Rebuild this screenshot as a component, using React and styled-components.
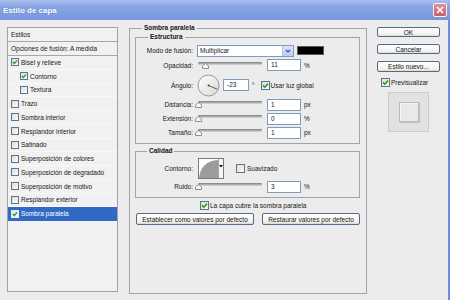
import React from 'react';
import styled, { createGlobalStyle } from 'styled-components';

const GlobalStyle = createGlobalStyle`
  html, body {
    margin: 0;
    padding: 0;
  }
  body {
    width: 450px;
    height: 300px;
    overflow: hidden;
    background: #ececec;
    font-family: "Liberation Sans", Arial, sans-serif;
    font-size: 6.5px;
    color: #161616;
  }
`;

const Window = styled.div`
  width: 450px;
  height: 300px;
  display: flex;
  flex-direction: column;
  background: #ececec;
`;

const TitleBar = styled.div`
  height: 20px;
  flex: none;
  box-sizing: border-box;
  display: flex;
  align-items: center;
  justify-content: space-between;
  padding: 0 3px;
  background: linear-gradient(#a9bfef 0%, #88a4e3 35%, #7896dc 100%);
`;

const Title = styled.span`
  color: #fff;
  font-weight: bold;
  font-size: 8px;
  text-shadow: 0 0 1px rgba(40, 60, 140, 0.5);
`;

const CloseButton = styled.div`
  width: 14px;
  height: 14px;
  box-sizing: border-box;
  border: 1px solid #f2f2f2;
  border-radius: 2px;
  background: linear-gradient(#e2919a, #cb5e6c);
  display: flex;
  align-items: center;
  justify-content: center;
`;

const Body = styled.div`
  flex: 1;
  min-height: 0;
  display: flex;
  padding: 4px 0 6px 7px;
  border-right: 2px solid #6b8de3;
`;

/* left list */
const StylesPanel = styled.div`
  width: 111px;
  flex: none;
  box-sizing: border-box;
  margin: 3px 0 2px 0;
  border: 1px solid #a2a2a2;
  background: #f1f1f1;
`;

const PanelHeader = styled.div`
  height: 14px;
  box-sizing: border-box;
  display: flex;
  align-items: center;
  padding-left: 3px;
  border-bottom: 1px solid #a6a6a6;
`;

const StyleRow = styled.div`
  height: 13.75px;
  box-sizing: border-box;
  display: flex;
  align-items: center;
  gap: 2px;
  padding-left: ${p => (p.$indent ? 12 : 3)}px;
  border-bottom: 1px solid ${p => (p.$selected ? '#316ac5' : '#f9f9f9')};
  background: ${p => (p.$selected ? '#316ac5' : 'transparent')};
  color: ${p => (p.$selected ? '#fff' : 'inherit')};
`;

/* checkbox */
const Box = styled.span`
  width: ${p => p.$size}px;
  height: ${p => p.$size}px;
  flex: none;
  box-sizing: border-box;
  border: 1px solid ${p => (p.$light ? '#e8eef8' : '#5a7494')};
  background: linear-gradient(135deg, #dedcd4, #fbfbf9);
  display: inline-flex;
  align-items: center;
  justify-content: center;
`;

const Check = ({ checked, size = 8, light }) => (
  <Box $size={size} $light={light}>
    {checked && (
      <svg width={size - 2} height={size - 2} viewBox="0 0 7 7">
        <polyline points="1,3.4 2.8,5.2 6,1.6" fill="none" stroke="#21a121" strokeWidth="1.6" />
      </svg>
    )}
  </Box>
);

/* main */
const Group = styled.fieldset`
  margin: ${p => p.$margin || 0};
  padding: ${p => p.$pad};
  min-width: 0;
  box-sizing: border-box;
  border: 1px solid #a4a4a4;
`;

const MainGroup = styled(Group)`
  width: 238px;
  flex: none;
  margin-left: 11px;
`;

const Legend = styled.legend`
  font-weight: bold;
  line-height: 8px;
  padding: 0 2px;
  margin-left: ${p => p.$ml}px;
`;

const FieldRow = styled.div`
  display: flex;
  align-items: center;
  height: ${p => p.$h}px;
  margin-top: ${p => p.$mt || 0}px;
`;

const FieldLabel = styled.span`
  width: 57px;
  flex: none;
  text-align: right;
  margin-right: 4px;
`;

const Select = styled.div`
  width: 97px;
  height: 12px;
  box-sizing: border-box;
  border: 1px solid #7f9db9;
  background: #fff;
  display: flex;
  align-items: stretch;
`;

const SelectText = styled.span`
  flex: 1;
  padding-left: 2px;
  line-height: 10px;
`;

const SelectArrow = styled.span`
  width: 10px;
  background: linear-gradient(#dbe6fe, #b9cdfa);
  border-left: 1px solid #b4c7f0;
  display: flex;
  align-items: center;
  justify-content: center;
`;

const Swatch = styled.div`
  width: 27px;
  height: 9px;
  box-sizing: border-box;
  margin-left: 3px;
  background: #000;
  border: 1px solid #5a5a5a;
`;

const SliderWrap = styled.div`
  position: relative;
  width: 64px;
  height: 9px;
  flex: none;
  margin: 0 5px 0 1px;
`;

const Track = styled.div`
  position: absolute;
  left: 0;
  right: 0;
  top: 1px;
  height: 3px;
  border-radius: 1px;
  background: linear-gradient(#7e7e7e, #bdbdbd 70%, #dedede);
`;

const Thumb = styled.svg`
  position: absolute;
  top: 2px;
  margin-left: -3px;
`;

const Slider = ({ value }) => (
  <SliderWrap>
    <Track />
    <Thumb width="7" height="6" viewBox="0 0 7 6" style={{ left: `${value}%` }}>
      <polygon points="0.5,3 3.5,0.5 6.5,3 6.5,5.5 0.5,5.5" fill="#f6f6f6" stroke="#777" strokeWidth="0.8" />
    </Thumb>
  </SliderWrap>
);

const NumBox = styled.div`
  width: ${p => p.$w}px;
  height: 12px;
  flex: none;
  box-sizing: border-box;
  margin-left: ${p => p.$ml || 0}px;
  border: 1px solid #7f9db9;
  background: #fff;
  padding-left: 3px;
  line-height: 10px;
`;

const Unit = styled.span`
  margin-left: ${p => p.$ml || 3}px;
`;

const Dial = () => (
  <svg width="23" height="23" viewBox="0 0 23 23">
    <defs>
      <linearGradient id="dialFill" x1="0" y1="0" x2="1" y2="1">
        <stop offset="0" stopColor="#ffffff" />
        <stop offset="1" stopColor="#d8d8d8" />
      </linearGradient>
    </defs>
    <circle cx="11.5" cy="11.5" r="10.5" fill="url(#dialFill)" stroke="#8e8e8e" strokeWidth="0.9" />
    <line x1="11.5" y1="11.5" x2="20.3" y2="15.2" stroke="#3a3a3a" strokeWidth="0.8" />
    <circle cx="11.5" cy="11.5" r="0.9" fill="#3a3a3a" />
  </svg>
);

const ContourBox = styled.div`
  width: 26px;
  height: 21px;
  flex: none;
  box-sizing: border-box;
  margin-left: 1px;
  border: 1px solid #7a7a7a;
  background: #fff;
  display: flex;
`;

const ContourArrow = styled.div`
  flex: 1;
  border-left: 1px solid #a8a8a8;
  background: #f4f4f4;
  display: flex;
  justify-content: center;
  padding-top: 6px;
`;

const CheckLabel = styled.span`
  margin-left: ${p => p.$ml || 1}px;
`;

const ButtonRow = styled.div`
  display: flex;
  gap: 8px;
  margin: 2px 0 0 1px;
`;

const Button = styled.div`
  width: ${p => (p.$w ? `${p.$w}px` : 'auto')};
  height: ${p => p.$h || 12}px;
  box-sizing: border-box;
  border: 1px solid #54698b;
  border-radius: 2px;
  background: linear-gradient(#fefefe, #f2f2ee 80%, #d9d5cc);
  display: flex;
  align-items: center;
  justify-content: center;
  white-space: nowrap;
`;

/* right column */
const SideColumn = styled.div`
  width: 63px;
  flex: none;
  margin: 3px 0 0 10px;
  display: flex;
  flex-direction: column;
  gap: 7px;
`;

const PreviewRow = styled.div`
  display: flex;
  align-items: center;
  height: 9px;
  margin: -1px 0 0 4px;
`;

const PreviewBox = styled.div`
  width: 41px;
  height: 40px;
  box-sizing: border-box;
  margin: -2px 0 0 11px;
  border: 1px solid #cbcbcb;
  background: #e2e2e2;
  display: flex;
  align-items: center;
  justify-content: center;
`;

const PreviewSwatch = styled.div`
  width: 20px;
  height: 20px;
  box-sizing: border-box;
  border: 1px solid #b9b9b9;
  background: #e9e9e9;
  box-shadow: 1px 1px 1px #c4c4c4, inset 1px 1px 0 #f6f6f6;
`;

const layerStyles = [
  { name: 'Bisel y relieve', checked: true },
  { name: 'Contorno', checked: true, indent: true },
  { name: 'Textura', indent: true },
  { name: 'Trazo' },
  { name: 'Sombra interior' },
  { name: 'Resplandor interior' },
  { name: 'Satinado' },
  { name: 'Superposición de colores' },
  { name: 'Superposición de degradado' },
  { name: 'Superposición de motivo' },
  { name: 'Resplandor exterior' },
  { name: 'Sombra paralela', checked: true, selected: true },
];

const App = () => (
  <Window>
    <GlobalStyle />
    <TitleBar>
      <Title>Estilo de capa</Title>
      <CloseButton>
        <svg width="8" height="8" viewBox="0 0 8 8">
          <path d="M1 1 L7 7 M7 1 L1 7" stroke="#fff" strokeWidth="1.6" />
        </svg>
      </CloseButton>
    </TitleBar>

    <Body>
      <StylesPanel>
        <PanelHeader>Estilos</PanelHeader>
        <PanelHeader>Opciones de fusión: A medida</PanelHeader>
        {layerStyles.map(s => (
          <StyleRow key={s.name} $indent={s.indent} $selected={s.selected}>
            <Check checked={s.checked} light={s.selected} />
            <span>{s.name}</span>
          </StyleRow>
        ))}
      </StylesPanel>

      <MainGroup $pad="1px 6px 0 5px">
        <Legend $ml={7}>Sombra paralela</Legend>

        <Group $pad="3px 0 4px 0">
          <Legend $ml={12}>Estructura</Legend>
          <FieldRow $h={13}>
            <FieldLabel>Modo de fusión:</FieldLabel>
            <Select>
              <SelectText>Multiplicar</SelectText>
              <SelectArrow>
                <svg width="6" height="4" viewBox="0 0 6 4">
                  <polyline points="0.8,0.8 3,3 5.2,0.8" fill="none" stroke="#2c4a8a" strokeWidth="1.2" />
                </svg>
              </SelectArrow>
            </Select>
            <Swatch />
          </FieldRow>
          <FieldRow $h={14} $mt={1}>
            <FieldLabel>Opacidad:</FieldLabel>
            <Slider value={11} />
            <NumBox $w={34}>11</NumBox>
            <Unit>%</Unit>
          </FieldRow>
          <FieldRow $h={24} $mt={1}>
            <FieldLabel>Ángulo:</FieldLabel>
            <Dial />
            <NumBox $w={26} $ml={3}>-23</NumBox>
            <Unit $ml={3}>°</Unit>
            <Unit $ml={6}>
              <Check checked size={9} />
            </Unit>
            <CheckLabel>Usar luz global</CheckLabel>
          </FieldRow>
          <FieldRow $h={13} $mt={1}>
            <FieldLabel>Distancia:</FieldLabel>
            <Slider value={0} />
            <NumBox $w={34}>1</NumBox>
            <Unit>px</Unit>
          </FieldRow>
          <FieldRow $h={13} $mt={1}>
            <FieldLabel>Extensión:</FieldLabel>
            <Slider value={0} />
            <NumBox $w={34}>0</NumBox>
            <Unit>%</Unit>
          </FieldRow>
          <FieldRow $h={13} $mt={1}>
            <FieldLabel>Tamaño:</FieldLabel>
            <Slider value={0} />
            <NumBox $w={34}>1</NumBox>
            <Unit>px</Unit>
          </FieldRow>
        </Group>

        <Group $pad="3px 0 4px 0" $margin="3px 0 0 0">
          <Legend $ml={11}>Calidad</Legend>
          <FieldRow $h={21}>
            <FieldLabel>Contorno:</FieldLabel>
            <ContourBox>
              <svg width="19" height="19" viewBox="0 0 19 19">
                <path d="M0 19 Q2 2 19 1 L19 19 Z" fill="#9c9c9c" />
              </svg>
              <ContourArrow>
                <svg width="4" height="3" viewBox="0 0 4 3">
                  <polygon points="0,0 4,0 2,2.5" fill="#111" />
                </svg>
              </ContourArrow>
            </ContourBox>
            <Unit $ml={12}>
              <Check size={9} />
            </Unit>
            <CheckLabel $ml={2}>Suavizado</CheckLabel>
          </FieldRow>
          <FieldRow $h={13} $mt={1}>
            <FieldLabel>Ruido:</FieldLabel>
            <Slider value={0} />
            <NumBox $w={34}>3</NumBox>
            <Unit>%</Unit>
          </FieldRow>
        </Group>

        <FieldRow $h={11} $mt={2}>
          <Unit $ml={65}>
            <Check checked size={9} />
          </Unit>
          <CheckLabel>La capa cubre la sombra paralela</CheckLabel>
        </FieldRow>
        <ButtonRow>
          <Button $w={118}>Establecer como valores por defecto</Button>
          <Button $w={98}>Restaurar valores por defecto</Button>
        </ButtonRow>
      </MainGroup>

      <SideColumn>
        <Button $h={10}>OK</Button>
        <Button $h={10}>Cancelar</Button>
        <Button $h={11}>Estilo nuevo...</Button>
        <PreviewRow>
          <Check checked size={9} />
          <CheckLabel>Previsualizar</CheckLabel>
        </PreviewRow>
        <PreviewBox>
          <PreviewSwatch />
        </PreviewBox>
      </SideColumn>
    </Body>
  </Window>
);

export default App;
